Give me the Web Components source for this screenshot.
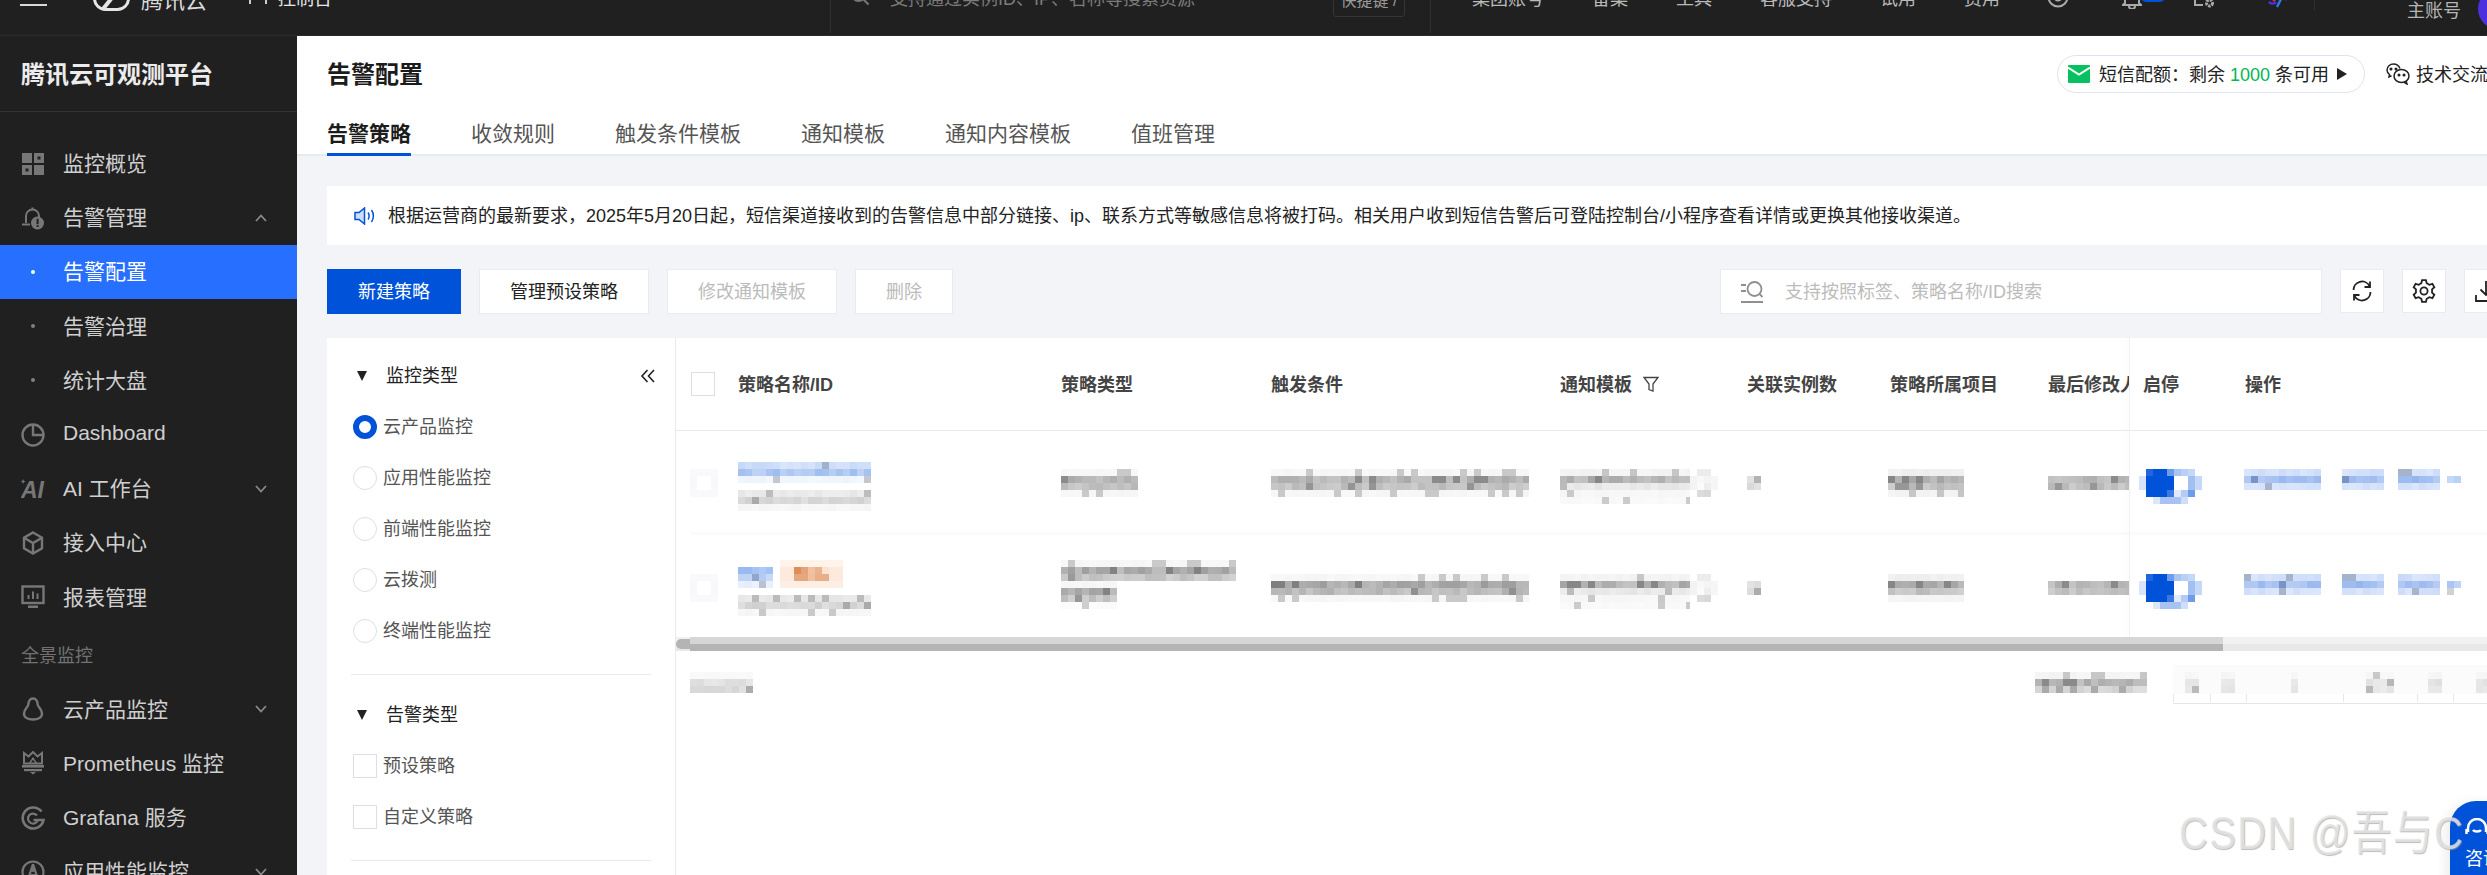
<!DOCTYPE html>
<html lang="zh-CN">
<head>
<meta charset="utf-8">
<title>告警配置</title>
<style>
  html, body { margin: 0; padding: 0; width: 2487px; height: 875px; overflow: hidden; background: #fff; }
  body { font-family: "Liberation Sans", "Noto Sans CJK SC", sans-serif; font-size: 18px; }
  tce-console { width: 2487px; height: 875px; }
</style>
</head>
<body>
<tce-console></tce-console>
<script>
// cog outline, used by the toolbar settings button
function cogPath(teeth, outer, inner) {
  let d = '';
  const step = (Math.PI * 2) / teeth;
  for (let i = 0; i < teeth; i++) {
    const a = i * step - Math.PI / 2;
    const pts = [
      [a - step * 0.32, inner], [a - step * 0.17, outer],
      [a + step * 0.17, outer], [a + step * 0.32, inner]
    ];
    pts.forEach(([ang, r]) => {
      const x = (12 + Math.cos(ang) * r).toFixed(2);
      const y = (12 + Math.sin(ang) * r).toFixed(2);
      d += (d ? 'L' : 'M') + x + ' ' + y;
    });
  }
  return d + 'Z';
}

const svg = (body, extra = '') =>
  `<svg viewBox="0 0 24 24" width="100%" height="100%" fill="none" ${extra}>${body}</svg>`;

const NAV_ICONS = {
  grid: svg(`<g fill="#777"><rect x="1" y="1" width="10" height="10"/><rect x="13" y="1" width="10" height="10"/><rect x="1" y="13" width="10" height="10"/><rect x="13" y="13" width="10" height="10"/></g>
    <rect x="16.5" y="4.5" width="3" height="3" fill="#202020"/><rect x="4.5" y="16.5" width="3" height="3" fill="#202020"/>`),
  bell: svg(`<path d="M10.5 2.5h2M5 17V10a6.5 6.5 0 0 1 13 0v1" stroke="#777" stroke-width="2"/><path d="M1 18.5h8" stroke="#777" stroke-width="2"/><circle cx="16.5" cy="17" r="6.5" fill="#777"/><rect x="15.6" y="12.8" width="2" height="5.4" fill="#202020"/><rect x="15.6" y="19.2" width="2" height="1.8" fill="#202020"/>`),
  dash: svg(`<circle cx="12" cy="12" r="10.5" stroke="#777" stroke-width="2.4"/><path d="M12 2v10h10.5" stroke="#777" stroke-width="2.4"/>`),
  ai: svg(`<text x="0" y="21" font-family="Liberation Sans" font-weight="700" font-style="italic" font-size="23" fill="#777">AI</text><path d="M3 3l1 2.5L6.5 6.500 4 7.500 3 10 2 7.500-.500 6.500 2 5.500z" fill="#777" transform="scale(.7)"/>`),
  cube: svg(`<path d="M12 1.500l9 5.200v10.600l-9 5.200-9-5.200V6.700z" stroke="#777" stroke-width="2.400"/><path d="M3 6.700l9 5.300 9-5.300M12 12v10" stroke="#777" stroke-width="2.400"/>`),
  report: svg(`<rect x="1.500" y="1.500" width="21" height="16.500" stroke="#777" stroke-width="2.400"/><path d="M7.500 14V10M12 14V6.500M16.500 14V8.500" stroke="#777" stroke-width="2"/><rect x="7" y="20.500" width="10" height="2.500" fill="#777"/>`),
  pear: svg(`<path d="M12 1.500c3.200 0 4.600 3 4.600 5.800 0 2.500 4.400 4.500 4.400 9.200 0 4-4 6-9 6s-9-2-9-6c0-4.700 4.400-6.700 4.400-9.200 0-2.800 1.400-5.800 4.600-5.800z" stroke="#777" stroke-width="2.400"/>`),
  prom: svg(`<path d="M3 2l4.500 3.500L12 1l4.500 4.500L21 2v10.500H3z" stroke="#777" stroke-width="2"/><path d="M9 12.500c0-3 3-3 3-6 0 3 3 3 3 6" stroke="#777" stroke-width="1.600"/><rect x="1" y="14" width="22" height="2.600" fill="#777"/><rect x="3" y="18" width="18" height="2.200" fill="#777"/><path d="M9 21h6l-3 2.500z" fill="#777"/>`),
  grafana: svg(`<path d="M20.500 5.500A10.500 10.500 0 1 0 22.500 14H12.500" stroke="#777" stroke-width="2.600"/><path d="M16 9.500A5 5 0 1 0 16.800 14" stroke="#777" stroke-width="2.200"/>`),
  apm: svg(`<circle cx="12" cy="12" r="10.500" stroke="#777" stroke-width="2.200"/><path d="M12 4l-5.500 17M12 4l5.500 17M8 15h8" stroke="#777" stroke-width="2.200"/><circle cx="12" cy="10" r="2" fill="#777"/>`)
};

// blurred-out table content: a grid of 7px squares
class MosaicBlock extends HTMLElement {
  connectedCallback() {
    this.attachShadow({ mode: 'open' });
    const matrix = this.getAttribute('matrix');
    const cell = 7;
    let rects = '', w, h;
    const put = (x, y, c) => {
      rects += `<rect x="${x * cell}" y="${y * cell}" width="${cell}" height="${cell}" fill="${c}"/>`;
    };
    if (matrix) {
      const rows = matrix.split(';').map((r) => r.trim().split(/\s+/));
      rows.forEach((r, y) => r.forEach((c, x) => { if (c !== '-') put(x, y, '#' + c); }));
      w = rows[0].length * cell;
      h = rows.length * cell;
    } else {
      w = Number(this.getAttribute('w')) || 70;
      const tones = (this.getAttribute('tones') || '#ccc').split(',');
      let seed = (Number(this.getAttribute('seed')) || 1) * 7919 + w;
      const rnd = () => {
        seed = (seed * 1664525 + 1013904223) % 4294967296;
        return seed / 4294967296;
      };
      const cols = Math.ceil(w / cell);
      tones.forEach((tone, y) => {
        const [r, g, b] = [1, 3, 5].map((i) => parseInt(tone.slice(i, i + 2), 16));
        for (let x = 0; x < cols; x++) {
          const roll = rnd();
          const mix = roll > 0.88 ? -0.18 : roll * 0.38;
          const ch = (v) => Math.round(mix < 0 ? v * (1 + mix) : v + (255 - v) * mix);
          put(x, y, `rgb(${ch(r)},${ch(g)},${ch(b)})`);
        }
      });
      h = tones.length * cell;
    }
    this.shadowRoot.innerHTML = `<style>:host{display:block;flex:none;width:${w}px;height:${h}px;overflow:hidden}svg{display:block}</style>
      <svg width="${w}" height="${h}" viewBox="0 0 ${w} ${h}" shape-rendering="crispEdges">${rects}</svg>`;
  }
}
customElements.define('mosaic-block', MosaicBlock);

class TopBar extends HTMLElement {
  connectedCallback() {
    this.attachShadow({ mode: 'open' });
    this.shadowRoot.innerHTML = `<style>
      :host { display: block; height: 36px; background: #202020; overflow: hidden; box-sizing: border-box; border-bottom: 1px solid #2c2c2c; position: relative; }
      .row { display: flex; align-items: center; height: 72px; margin-top: -39px; color: #b9b9b9; white-space: nowrap; font-size: 18px; }
      .row > * { flex: none; }
      .burger { width: 27px; height: 20px; margin-left: 20px; background: linear-gradient(#d8d8d8 0 0) bottom/100% 2px no-repeat; margin-top: -2px; }
      .logo { width: 37px; height: 28px; margin-left: 46px; margin-top: 0; }
      .brand { margin-left: 11px; font-size: 22px; color: #dcdcdc; margin-top: 2px; }
      .console { margin-left: 42px; width: 18px; height: 16px; border-left: 2px solid #ccc; border-right: 2px solid #ccc; box-sizing: border-box; margin-top: -2px; }
      .consoletxt { margin-left: 11px; color: #e6e6e6; }
      .sep { width: 1px; height: 72px; background: #2e2e2e; }
      .q { width: 20px; height: 20px; margin-left: 19px; margin-top: -2px; }
      .hint { margin-left: 20px; color: #7b7b7b; }
      .kbd { margin-left: 138px; width: 72px; height: 32px; box-sizing: border-box; border: 1px solid #363636; border-radius: 3px; text-align: center; line-height: 30px; color: #9a9a9a; font-size: 16px; margin-top: 8px; }
      .nav { display: flex; gap: 48px; }
      .ic { height: 24px; margin-top: 0; }
      .badge { position: absolute; left: 2141px; top: -8px; width: 24px; height: 10px; background: #0052d9; border-radius: 6px; }
      .user { font-size: 18px; color: #b5b5b5; margin-left: 92px; margin-top: 24px; }
      .avatar { width: 40px; height: 40px; margin-left: 17px; margin-top: 24px; border-radius: 50%; background: #4b30e0; }
    </style>
    <div class="row">
      <div class="burger"></div>
      <svg class="logo" viewBox="0 0 37 28" fill="none"><rect x="1.500" y="1.500" width="34" height="25" rx="11" stroke="#e6e6e6" stroke-width="3"/><path d="M10 26L26 6" stroke="#e6e6e6" stroke-width="4"/></svg>
      <span class="brand">腾讯云</span>
      <div class="console"></div>
      <span class="consoletxt">控制台</span>
      <div class="sep" style="margin-left:498px"></div>
      <svg class="q" viewBox="0 0 20 20" fill="none" stroke="#777" stroke-width="2"><circle cx="8.500" cy="8.500" r="6.500"/><path d="M13.500 13.500l5 5"/></svg>
      <span class="hint">支持通过实例ID、IP、名称等搜索资源</span>
      <span class="kbd">快捷键 /</span>
      <div class="sep" style="margin-left:25px"></div>
      <div class="nav" style="margin-left:41px"><span>集团账号</span><span>备案</span><span>工具</span><span>客服支持</span><span>试用</span><span>费用</span></div>
      <svg class="ic" style="margin-left:47px;width:22px" viewBox="0 0 22 24" fill="none" stroke="#aaa" stroke-width="2"><circle cx="11" cy="12" r="9.500"/><circle cx="11" cy="12" r="3.500"/></svg>
      <svg class="ic" style="margin-left:53px;width:20px" viewBox="0 0 20 24" fill="none" stroke="#aaa" stroke-width="2"><path d="M3 18V10a7 7 0 0 1 14 0v8l2 2H1zM7 21a3 3 0 0 0 6 0"/></svg>
      <svg class="ic" style="margin-left:51px;width:22px" viewBox="0 0 22 24" fill="none" stroke="#aaa" stroke-width="2"><path d="M2 4v16h8"/><circle cx="16.500" cy="18" r="3" stroke-width="3" stroke-dasharray="2.500 1"/></svg>
      <svg class="ic" style="margin-left:53px;width:20px" viewBox="0 0 20 24" fill="none" stroke-width="2.500"><path d="M1 17c2 2 5 2 7 0" stroke="#4b30e0"/><path d="M9 22l4-8" stroke="#2a7bf0"/><circle cx="6" cy="15" r="1.500" fill="#d9304f"/><path d="M15 10c3 1 3 3 2 5" stroke="#2a7bf0"/></svg>
      <div class="sep" style="margin-left:26px;height:26px;margin-top:0"></div>
      <span class="user">主账号</span>
      <div class="avatar"></div>
    </div>
    <div class="badge"></div>`;
  }
}
customElements.define('top-bar', TopBar);

class NavItem extends HTMLElement {
  connectedCallback() {
    const icon = this.getAttribute('icon');
    const arrow = this.getAttribute('arrow');
    const sub = this.hasAttribute('sub');
    const chevron = arrow
      ? `<svg class="arrow" viewBox="0 0 12 8" fill="none" stroke="#8a8a8a" stroke-width="1.800"><path d="${arrow === 'up' ? 'M1 7l5-5.500L11 7' : 'M1 1l5 5.500L11 1'}"/></svg>`
      : '';
    this.attachShadow({ mode: 'open' });
    this.shadowRoot.innerHTML = `<style>
      :host { display: flex; align-items: center; height: 54.200px; padding-left: 21px; color: #cfcfcf; font-size: 21px; white-space: nowrap; position: relative; }
      :host([active]) { background: #266fff; color: #fff; }
      .ico { width: 24px; height: 24px; margin-right: 18px; flex: none; display: flex; align-items: center; justify-content: center; }
      .dot { width: 4px; height: 4px; border-radius: 50%; background: #808080; }
      :host([active]) .dot { background: #fff; }
      .txt { margin-bottom: 3px; }
      .arrow { position: absolute; left: 255px; top: 50%; width: 12px; height: 8px; margin-top: -4px; }
    </style>
    <span class="ico">${sub ? '<span class="dot"></span>' : NAV_ICONS[icon] || ''}</span><span class="txt"><slot></slot></span>${chevron}`;
  }
}
customElements.define('nav-item', NavItem);

class SideNav extends HTMLElement {
  connectedCallback() {
    this.attachShadow({ mode: 'open' });
    this.shadowRoot.innerHTML = `<style>
      :host { display: block; flex: none; width: 297px; background: #202020; overflow: hidden; }
      .title { height: 76px; box-sizing: border-box; padding: 0 0 3px 21px; display: flex; align-items: center; border-bottom: 1px solid #333; color: #ececec; font-size: 24px; font-weight: 700; }
      .menu { padding-top: 24.500px; }
      .label { height: 58px; box-sizing: border-box; padding: 2px 0 0 21px; display: flex; align-items: center; color: #727272; font-size: 18px; }
    </style>
    <div class="title">腾讯云可观测平台</div>
    <div class="menu">
      <nav-item icon="grid">监控概览</nav-item>
      <nav-item icon="bell" arrow="up">告警管理</nav-item>
      <nav-item sub active>告警配置</nav-item>
      <nav-item sub>告警治理</nav-item>
      <nav-item sub>统计大盘</nav-item>
      <nav-item icon="dash">Dashboard</nav-item>
      <nav-item icon="ai" arrow="down">AI 工作台</nav-item>
      <nav-item icon="cube">接入中心</nav-item>
      <nav-item icon="report">报表管理</nav-item>
      <div class="label">全景监控</div>
      <nav-item icon="pear" arrow="down">云产品监控</nav-item>
      <nav-item icon="prom">Prometheus 监控</nav-item>
      <nav-item icon="grafana">Grafana 服务</nav-item>
      <nav-item icon="apm" arrow="down">应用性能监控</nav-item>
    </div>`;
  }
}
customElements.define('side-nav', SideNav);

class PageHeader extends HTMLElement {
  connectedCallback() {
    this.attachShadow({ mode: 'open' });
    this.shadowRoot.innerHTML = `<style>
      :host { display: block; flex: none; height: 120px; box-sizing: border-box; background: #fff; border-bottom: 2px solid #e7eaef; white-space: nowrap; }
      .head { display: flex; align-items: center; height: 76px; padding-left: 30px; }
      h1 { margin: 0 0 3px; font-size: 24px; font-weight: 700; color: #1c1c1c; flex: none; }
      .pill { flex: none; margin-left: 1634px; height: 38px; width: 308px; box-sizing: border-box; border: 1px solid #dfe3ef; border-radius: 19px; display: flex; align-items: center; padding-left: 10px; font-size: 18px; color: #222; }
      .pill svg { width: 22px; height: 18px; margin-right: 9px; flex: none; }
      .pill > span { margin-bottom: 3px; }
      .pill b { font-weight: 400; color: #00b84f; }
      .pill .tri { width: 0; height: 0; border-left: 10px solid #222; border-top: 6px solid transparent; border-bottom: 6px solid transparent; margin: 0 0 0 8px; }
      .chat { flex: none; margin-left: 21px; display: flex; align-items: center; gap: 6px; font-size: 18px; color: #222; }
      .chat svg { width: 24px; height: 22px; }
      .chat span { margin-bottom: 3px; }
      nav { display: flex; gap: 60px; padding-left: 30px; height: 44px; }
      a { position: relative; display: flex; align-items: center; height: 42px; box-sizing: border-box; padding-bottom: 3px; font-size: 21px; color: #555; }
      a.on { color: #1c1c1c; font-weight: 700; }
      a.on::after { content: ""; position: absolute; left: 0; right: 0; bottom: -2px; height: 3px; background: #0052d9; }
    </style>
    <div class="head">
      <h1>告警配置</h1>
      <div class="pill">
        <svg viewBox="0 0 22 18"><rect width="22" height="18" rx="1" fill="#07c160"/><path d="M0 2.500l11 7 11-7" stroke="#fff" stroke-width="2" fill="none"/></svg>
        <span>短信配额：剩余 <b>1000</b> 条可用</span><span class="tri"></span>
      </div>
      <div class="chat">
        <svg viewBox="0 0 24 22" fill="none" stroke="#222" stroke-width="1.500"><path d="M14 5.500C13 3 10.500 1 7.500 1 4 1 1 3.500 1 7c0 2 1 3.500 2.500 4.500L3 14l2.500-1.200"/><ellipse cx="15.500" cy="13" rx="7.500" ry="6.500" fill="#fff"/><path d="M20 18l1 3-3-1.700"/><circle cx="13" cy="12" r=".8" fill="#222"/><circle cx="18" cy="12" r=".8" fill="#222"/><circle cx="5" cy="6" r=".8" fill="#222"/><circle cx="10" cy="6" r=".8" fill="#222"/></svg>
        <span>技术交流群</span>
      </div>
    </div>
    <nav><a class="on">告警策略</a><a>收敛规则</a><a>触发条件模板</a><a>通知模板</a><a>通知内容模板</a><a>值班管理</a></nav>`;
  }
}
customElements.define('page-header', PageHeader);

class NoticeBar extends HTMLElement {
  connectedCallback() {
    this.attachShadow({ mode: 'open' });
    this.shadowRoot.innerHTML = `<style>
      :host { display: flex; flex: none; align-items: center; height: 59px; margin: 30px 0 0 30px; background: #fff; padding-left: 27px; font-size: 18px; color: #222; white-space: nowrap; }
      svg { width: 22px; height: 18px; margin-right: 12px; flex: none; }
      span { margin-bottom: 3px; }
    </style>
    <svg viewBox="0 0 22 18" fill="none" stroke="#0052d9" stroke-width="1.500"><path d="M1 5.500h4L10.500 1v16L5 12.500H1z" fill="#cfdef8"/><path d="M14 5.500c1.300 2 1.300 5 0 7M17.500 3c2.500 3.500 2.500 8.500 0 12"/></svg>
    <span><slot></slot></span>`;
  }
}
customElements.define('notice-bar', NoticeBar);

class ToolButton extends HTMLElement {
  connectedCallback() {
    this.attachShadow({ mode: 'open' });
    this.shadowRoot.innerHTML = `<style>
      :host { display: flex; flex: none; align-items: center; justify-content: center; box-sizing: border-box; height: 45px; padding: 0 30px 3px; background: #fff; border: 1px solid #e9ebf1; font-size: 18px; color: #222; white-space: nowrap; }
      :host([primary]) { background: #0052d9; border-color: #0052d9; color: #fff; }
      :host([disabled]) { color: #bbb; }
      :host([square]) { width: 44px; padding: 0; height: 44px; }
      ::slotted(svg) { width: 24px; height: 24px; }
    </style><slot></slot>`;
  }
}
customElements.define('tool-button', ToolButton);

class ToolRow extends HTMLElement {
  connectedCallback() {
    this.attachShadow({ mode: 'open' });
    this.shadowRoot.innerHTML = `<style>
      :host { display: flex; flex: none; gap: 18px; height: 45px; margin: 24px 0 0 30px; }
      .search { flex: none; display: flex; align-items: center; width: 602px; height: 45px; box-sizing: border-box; margin-left: 749px; padding-left: 19px; background: #fff; border: 1px solid #e9ebf1; color: #bcbcbc; font-size: 18px; white-space: nowrap; }
      .search svg { width: 24px; height: 24px; margin-right: 21px; }
      .search span { margin-bottom: 3px; }
    </style>
    <tool-button primary>新建策略</tool-button>
    <tool-button>管理预设策略</tool-button>
    <tool-button disabled>修改通知模板</tool-button>
    <tool-button disabled>删除</tool-button>
    <div class="search">
      <svg viewBox="0 0 24 24" fill="none" stroke="#8f8f8f" stroke-width="1.800"><circle cx="14.500" cy="9" r="7"/><path d="M19.500 14l3 3M1 5h5M1 11h5M1 22h22" /></svg>
      <span>支持按照标签、策略名称/ID搜索</span>
    </div>
    <tool-button square><svg viewBox="0 0 24 24" fill="none" stroke="#222" stroke-width="1.800"><path d="M3.500 11A8.500 8.500 0 0 1 19.500 7"/><path d="M20 2.500V8h-5.500"/><path d="M20.500 13A8.500 8.500 0 0 1 4.500 17"/><path d="M4 21.500V16h5.500"/></svg></tool-button>
    <tool-button square><svg viewBox="0 0 24 24" fill="none" stroke="#222" stroke-width="1.800"><path d="${cogPath(6, 11, 8.200)}"/><circle cx="12" cy="12" r="3.600"/></svg></tool-button>
    <tool-button square><svg viewBox="0 0 24 24" fill="none" stroke="#222" stroke-width="1.800"><path d="M12 2v14M6.500 10.500L12 16l5.500-5.500M2 16v6h20v-6"/></svg></tool-button>`;
  }
}
customElements.define('tool-row', ToolRow);

class FilterGroup extends HTMLElement {
  connectedCallback() {
    const collapse = this.hasAttribute('collapse')
      ? `<svg class="fold" viewBox="0 0 16 14" fill="none" stroke="#222" stroke-width="1.600"><path d="M7.500 1L2 7l5.500 6M14 1L8.500 7l5.500 6"/></svg>`
      : '';
    this.attachShadow({ mode: 'open' });
    this.shadowRoot.innerHTML = `<style>
      :host { display: block; width: 300px; }
      .t { display: flex; align-items: center; height: 51px; font-size: 18px; color: #222; }
      .t span:nth-child(2) { margin-bottom: 3px; }
      .tri { width: 0; height: 0; margin: 0 19px 0 6px; border-top: 10px solid #222; border-left: 5.500px solid transparent; border-right: 5.500px solid transparent; }
      .fold { width: 16px; height: 14px; margin-left: auto; margin-right: -5px; }
    </style>
    <div class="t"><span class="tri"></span><span>${this.getAttribute('label')}</span>${collapse}</div>
    <slot></slot>`;
  }
}
customElements.define('filter-group', FilterGroup);

class FilterOption extends HTMLElement {
  connectedCallback() {
    this.attachShadow({ mode: 'open' });
    this.shadowRoot.innerHTML = `<style>
      :host { display: flex; align-items: center; height: 51px; margin-left: 2px; font-size: 18px; color: #555; white-space: nowrap; }
      .box { flex: none; width: 24px; height: 24px; margin-right: 6px; box-sizing: border-box; border: 1px solid #dcdfe8; background: #fff; }
      :host([type="radio"]) .box { border-radius: 50%; }
      :host([checked]) .box { border: 6px solid #0052d9; }
      .txt { margin-bottom: 3px; }
    </style><span class="box"></span><span class="txt"><slot></slot></span>`;
  }
}
customElements.define('filter-option', FilterOption);

class FilterPanel extends HTMLElement {
  connectedCallback() {
    this.attachShadow({ mode: 'open' });
    this.shadowRoot.innerHTML = `<style>
      :host { display: block; flex: none; width: 349px; box-sizing: border-box; padding: 12px 0 0 24px; border-right: 1px solid #e7eaef; background: #fff; }
      hr { border: 0; border-top: 1px solid #e7eaef; width: 300px; margin: 0; }
    </style>
    <filter-group label="监控类型" collapse>
      <filter-option type="radio" checked>云产品监控</filter-option>
      <filter-option type="radio">应用性能监控</filter-option>
      <filter-option type="radio">前端性能监控</filter-option>
      <filter-option type="radio">云拨测</filter-option>
      <filter-option type="radio">终端性能监控</filter-option>
    </filter-group>
    <hr style="margin-top:18px;margin-bottom:14px">
    <filter-group label="告警类型">
      <filter-option>预设策略</filter-option>
      <filter-option>自定义策略</filter-option>
    </filter-group>
    <hr style="margin-top:18px">`;
  }
}
customElements.define('filter-panel', FilterPanel);

const GREY4 = '#f5f5f5,#a9a9a9,#b5b5b5,#f5f5f5';
const GREY2 = '#a9a9a9,#b8b8b8';
const CHECK_CELLS = 'f9f9fb f9f9fb f9f9fb f9f9fb;f8f8fa ffffff ffffff f8f8fa;f8f8fa ffffff ffffff f8f8fa;f9f9fb f9f9fb f9f9fb f9f9fb';
const CIRCLE_CELLS = 'ffffff ececec ececec ffffff;f3f3f3 f8f8f8 f4f4f4 f6f6f6;f3f3f3 fbfbfb eeeeee f6f6f6;ffffff dcdcdc d8d8d8 ffffff';
const SWITCH_CELLS = 'ffffff 1f66e0 0052d9 0052d9 6f9cea a9c4f2 b9cff5 c5d8f8 ffffff;d8e4fa 0052d9 0052d9 0052d9 0052d9 ffffff ffffff a3c0f2 c5d8f8;d8e4fa 0052d9 0052d9 0052d9 0052d9 ffffff ffffff a3c0f2 c5d8f8;ffffff 0052d9 0052d9 0052d9 3a78e2 e0eafb b3cbf5 6f9cea ffffff;ffffff ffffff dce7fa a8c2f2 a8c2f2 a8c2f2 cfdef8 ffffff ffffff';
const TAG_CELLS = 'fff3ea fff3ea fff3ea fff3ea fff3ea fff3ea fff3ea fff3ea fff3ea;fdeadd fdeadd de8c58 e6a27a f0c0a0 ecb28d fbe3d2 fdeadd fdeadd;fdeadd fdeadd e6a67e e6a67e eec09f e9ad88 e9ad88 fdeadd fdeadd;fdeee3 fdeee3 fdeee3 fdeee3 fdeee3 fdeee3 fdeee3 fdeee3 fdeee3';
const BLUE3 = '#c6d8f8,#9dbcf0,#eef4fe';
const LINK3 = '#c9daf9,#94b4ee,#cddcf9';

class PolicyTable extends HTMLElement {
  row(n, top, height, name, type, trigger) {
    const lane = (html, extra = '') => `<div class="cell" style="padding-top:${top}px;${extra}">${html}</div>`;
    return `<div class="row" style="height:${height}px">
      ${lane(`<mosaic-block matrix="${CHECK_CELLS}"></mosaic-block>`, 'padding-left:14px')}
      ${name}
      ${type}
      ${lane(`<mosaic-block w="258" tones="${trigger}" seed="${n + 2}"></mosaic-block>`)}
      <div class="cell flex" style="padding-top:${top}px">
        <mosaic-block w="130" tones="#f1f1f1,#a5a5a5,#e4e4e4,#f5f5f5,#f8f8f8" seed="${n + 3}" style="height:35px"></mosaic-block>
        <mosaic-block matrix="${CIRCLE_CELLS}"></mosaic-block>
      </div>
      ${lane(`<mosaic-block w="14" tones="#dadada,#d2d2d2" seed="${n + 4}"></mosaic-block>`, `padding-top:${top + 7}px`)}
      ${lane(`<mosaic-block w="76" tones="#ececec,#a4a4a4,#b8b8b8,#f2f2f2" seed="${n + 5}"></mosaic-block>`, 'margin-left:-2px')}
      <div class="cell clip" style="padding-top:${top + 7}px"><mosaic-block w="84" tones="${GREY2}" seed="${n + 6}"></mosaic-block></div>
      ${lane(`<mosaic-block matrix="${SWITCH_CELLS}"></mosaic-block>`, 'padding-left:10px')}
      <div class="cell flex" style="padding-top:${top}px">
        <mosaic-block w="77" tones="${LINK3}" seed="${n + 7}"></mosaic-block>
        <mosaic-block w="42" tones="${LINK3}" seed="${n + 8}" style="margin-left:21px"></mosaic-block>
        <mosaic-block w="42" tones="${LINK3}" seed="${n + 9}" style="margin-left:14px"></mosaic-block>
        <mosaic-block w="14" tones="#ffffff,#aac6f5,#ffffff" seed="${n + 1}" style="margin-left:7px"></mosaic-block>
      </div>
    </div>`;
  }

  connectedCallback() {
    this.attachShadow({ mode: 'open' });
    const nameOne = `<div class="cell" style="padding-top:31px"><mosaic-block w="133" tones="${BLUE3}" seed="11"></mosaic-block><mosaic-block w="133" tones="#e6e6e6,#d0d0d0,#f5f5f5" seed="12" style="margin-top:7px"></mosaic-block></div>`;
    const nameTwo = `<div class="cell" style="padding-top:25px">
        <div class="flex bottom"><mosaic-block w="35" tones="#93b5f2,#b3cbf5,#e4edfc" seed="13"></mosaic-block><mosaic-block matrix="${TAG_CELLS}" style="margin-left:7px"></mosaic-block></div>
        <mosaic-block w="133" tones="#e4e4e4,#cfcfcf,#f5f5f5" seed="15" style="margin-top:7px"></mosaic-block></div>`;
    const typeOne = `<div class="cell" style="padding-top:38px"><mosaic-block w="77" tones="${GREY4}" seed="16"></mosaic-block></div>`;
    const typeTwo = `<div class="cell" style="padding-top:25px"><mosaic-block w="175" tones="#f5f5f5,#9e9e9e,#bcbcbc" seed="17"></mosaic-block><mosaic-block w="56" tones="#f5f5f5,#a0a0a0,#b8b8b8,#fafafa" seed="18"></mosaic-block></div>`;
    this.shadowRoot.innerHTML = `<style>
      :host { display: block; flex: 1; min-width: 0; position: relative; overflow: hidden; background: #fff; }
      .grid, .row { display: grid; grid-template-columns: 62px 323px 210px 289px 187px 143px 158px 81px 115px 1fr; align-items: start; }
      .head { height: 93px; box-sizing: border-box; padding-bottom: 3px; border-bottom: 1px solid #e7eaef; align-items: center; font-size: 18px; font-weight: 700; color: #444; white-space: nowrap; }
      .head .flex { align-items: center; }
      .cb { display: block; width: 24px; height: 24px; box-sizing: border-box; margin: 3px 0 0 15px; border: 1px solid #dcdfe8; }
      .filter { width: 16px; height: 16px; margin: 3px 0 0 11px; }
      .clip { overflow: hidden; }
      .flex { display: flex; }
      .bottom { align-items: flex-end; }
      .row:first-of-type { border-bottom: 1px solid #f1f1f6; }
      .row { box-sizing: border-box; }
      .band { height: 3px; margin: -3px 0 0 14px; background: #fbfbfb; position: relative; }
      .fixed { position: absolute; left: 1453px; top: 0; width: 1px; height: 299px; background: #f1f1f1; box-shadow: -2px 0 4px rgba(0,0,0,.05); }
      .scroll { display: flex; height: 14px; background: linear-gradient(#f1f1f1 50%, #e8e8e8 50%); }
      .cap { flex: none; width: 14px; height: 10px; margin-top: 2px; background: #b4b4b4; border-radius: 6px 0 0 6px; }
      .thumb { flex: none; width: 1533px; background: linear-gradient(#d6d6d6 50%, #b4b4b4 50%); }
      .foot { display: flex; align-items: flex-start; padding: 14px 0 0 14px; white-space: nowrap; }
      .foot > mosaic-block { margin-top: 7px; }
      .pager { display: flex; margin-left: 26px; border-bottom: 1px solid #e5e5e5; height: 38px; flex: none; }
      .pg { flex: none; box-sizing: border-box; height: 37px; border-left: 1px solid #e8e8e8; }
      .pg div { display: flex; justify-content: center; height: 29px; padding-top: 7px; box-sizing: border-box; margin-left: -1px; background: #fbfbfb; }
    </style>
    <div class="grid head">
      <div><span class="cb"></span></div>
      <div>策略名称/ID</div>
      <div>策略类型</div>
      <div>触发条件</div>
      <div class="flex"><span>通知模板</span><svg class="filter" viewBox="0 0 16 16" fill="none" stroke="#444" stroke-width="1.300"><path d="M1 1.500h14l-5 6.500v7l-4-1.500V8z"/></svg></div>
      <div>关联实例数</div>
      <div>策略所属项目</div>
      <div class="clip">最后修改人</div>
      <div style="padding-left:14px">启停</div>
      <div style="padding-left:1px">操作</div>
    </div>
    ${this.row(1, 38, 104, nameOne, typeOne, GREY4)}
    <div class="band"></div>
    ${this.row(2, 39, 102, nameTwo, typeTwo, '#f5f5f5,#9b9b9b,#b0b0b0,#f5f5f5')}
    <div class="scroll"><div class="cap"></div><div class="thumb"></div></div>
    <div class="foot">
      <mosaic-block w="63" tones="#f8f8f8,#dcdcdc,#d2d2d2" seed="31"></mosaic-block>
      <mosaic-block w="112" tones="#f3f3f3,#a8a8a8,#cfcfcf" seed="32" style="margin-left:1282px"></mosaic-block>
      <div class="pager">
        ${[37, 36, 97, 74, 36, 60].map((w, i) => `<div class="pg" style="width:${w}px"><div><mosaic-block w="${[14, 14, 7, 28, 14, 14][i]}" tones="#f5f5f5,#dfdfdf,#e3e3e3" seed="${40 + i}"></mosaic-block></div></div>`).join('')}
      </div>
    </div>
    <div class="fixed"></div>`;
  }
}
customElements.define('policy-table', PolicyTable);

class ConsultFab extends HTMLElement {
  connectedCallback() {
    this.attachShadow({ mode: 'open' });
    this.shadowRoot.innerHTML = `<style>
      :host { position: absolute; left: 2450px; top: 801px; width: 70px; height: 100px; display: flex; flex-direction: column; align-items: flex-start; padding: 17px 0 0 15px; box-sizing: border-box; background: #0052d9; border-radius: 26px; color: #fff; font-size: 18px; white-space: nowrap; box-shadow: -4px 2px 12px rgba(0,0,0,.08); }
      svg { width: 24px; height: 22px; margin-bottom: 4px; }
    </style>
    <svg viewBox="0 0 24 22" fill="none" stroke="#fff" stroke-width="2.500"><path d="M3 14V10a9 9 0 0 1 18 0v4"/><path d="M1.500 11v5M22.500 11v5"/><path d="M8 12c1.500 2 6.500 2 8 0"/></svg>
    <span>咨询</span>`;
  }
}
customElements.define('consult-fab', ConsultFab);

class WaterMark extends HTMLElement {
  connectedCallback() {
    this.attachShadow({ mode: 'open' });
    this.shadowRoot.innerHTML = `<style>
      :host { position: absolute; left: 2179px; top: 805px; font: 47px/56px "Liberation Sans", "Noto Sans CJK SC", sans-serif; letter-spacing: 1.500px; color: rgba(232,232,232,.78); text-shadow: 1px 1px 1px rgba(160,160,160,.7); white-space: nowrap; transform: scaleX(.85); transform-origin: left top; pointer-events: none; }
    </style><slot></slot>`;
  }
}
customElements.define('water-mark', WaterMark);

class TceConsole extends HTMLElement {
  connectedCallback() {
    this.attachShadow({ mode: 'open' });
    this.shadowRoot.innerHTML = `<style>
      :host { display: block; position: relative; overflow: hidden; }
      .body { display: flex; height: 839px; }
      main { flex: 1; min-width: 0; display: flex; flex-direction: column; background: #f2f4f8; overflow: hidden; }
      .panel { flex: 1; min-height: 0; display: flex; margin: 24px 0 0 30px; background: #fff; }
    </style>
    <top-bar></top-bar>
    <div class="body">
      <side-nav></side-nav>
      <main>
        <page-header></page-header>
        <notice-bar>根据运营商的最新要求，2025年5月20日起，短信渠道接收到的告警信息中部分链接、ip、联系方式等敏感信息将被打码。相关用户收到短信告警后可登陆控制台/小程序查看详情或更换其他接收渠道。</notice-bar>
        <tool-row></tool-row>
        <div class="panel"><filter-panel></filter-panel><policy-table></policy-table></div>
      </main>
    </div>
    <consult-fab></consult-fab>
    <water-mark>CSDN @吾与C</water-mark>`;
  }
}
customElements.define('tce-console', TceConsole);
</script>
</body>
</html>
